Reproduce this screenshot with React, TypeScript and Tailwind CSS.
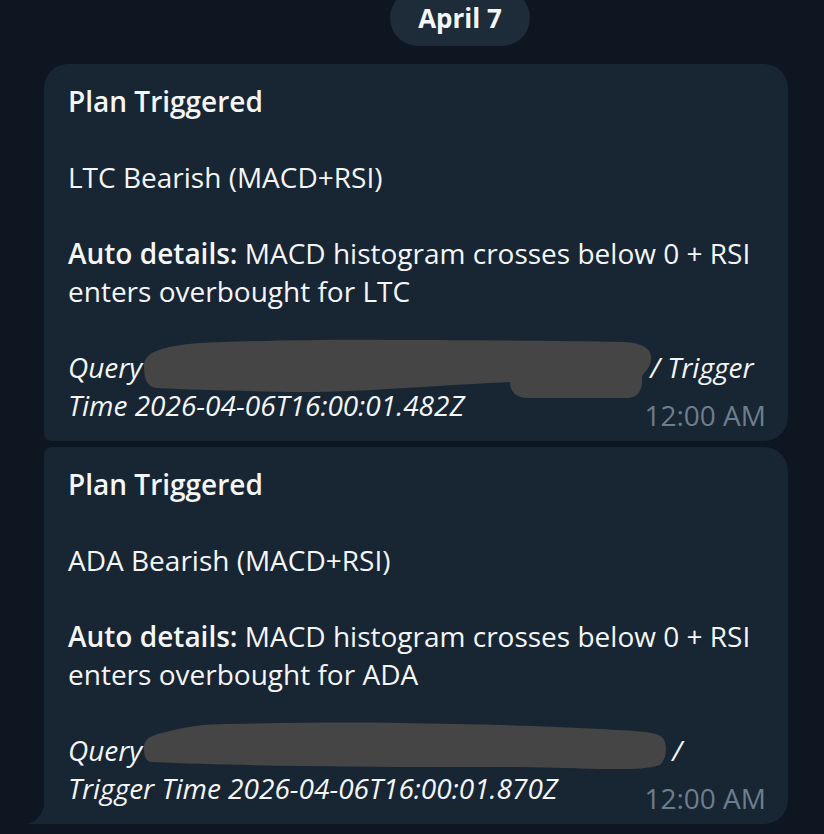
import React from "react";

function Blob1() {
  return (
    <svg className="absolute left-0 top-0 pointer-events-none" width="700" height="360" style={{ overflow: "visible" }}>
      <path
        d="M100 302 C100 288 118 282 156 279 C230 276 300 275 356 276 C430 276 520 277 580 278 C600 279 609 286 607 296 C606 304 601 308 598 312 C599 323 596 333 585 334 L485 334 C471 334 466 327 466 318 C430 320 406 321 380 323 C330 326 290 328 256 328 C200 327 150 326 112 324 C102 322 100 314 100 302 Z"
        fill="#454545"
      />
    </svg>
  );
}

function Blob2() {
  return (
    <svg className="absolute left-0 top-0 pointer-events-none" width="700" height="360" style={{ overflow: "visible" }}>
      <path
        d="M100 300 C100 292 108 288 118 286 C140 280 160 277 182 277 C240 276 300 275 356 276 C430 277 500 279 556 282 C590 284 610 284 618 290 C624 296 623 312 616 318 C600 323 580 322 556 322 C520 321 490 320 456 320 C390 320 320 320 256 319 C200 318 150 317 106 315 C101 313 100 308 100 300 Z"
        fill="#454545"
      />
    </svg>
  );
}

function Bubble({
  coin,
  first,
  queryLine,
  timeLine,
}: {
  coin: string;
  first: boolean;
  queryLine: React.ReactNode;
  timeLine: string;
}) {
  return (
    <div
      className={
        "relative bg-[#182533] text-[#f4f6f8] pl-[24px] pr-[22px] pt-[18px] pb-[17px] " +
        (first
          ? "rounded-tl-[24px] rounded-tr-[24px] rounded-br-[24px] rounded-bl-[7px]"
          : "rounded-tl-[7px] rounded-tr-[24px] rounded-br-[24px] rounded-bl-none")
      }
    >
      <div className="text-[28px] leading-[38px] whitespace-nowrap">
        <div className="font-semibold">Plan Triggered</div>
        <div className="h-[38px]" />
        <div>{coin} Bearish (MACD+RSI)</div>
        <div className="h-[38px]" />
        <div>
          <span className="font-semibold">Auto details:</span> MACD histogram crosses below 0 + RSI
        </div>
        <div>enters overbought for {coin}</div>
        <div className="h-[38px]" />
        <div className="italic">{queryLine}</div>
        <div className="flex items-end justify-between">
          <span className="italic">{timeLine}</span>
          <span className="text-[#6c7e8e] leading-[18px]">12:00 AM</span>
        </div>
      </div>
      {first ? <Blob1 /> : <Blob2 />}
      {!first && (
        <svg className="absolute left-[-17px] bottom-0" width="18" height="22" viewBox="0 0 18 22">
          <path d="M17.5 0 L17.5 22 L0 22 C8 20 16 14 17.5 0 Z" fill="#182533" />
        </svg>
      )}
    </div>
  );
}

export default function App() {
  return (
    <div className="min-h-[834px] w-[824px] overflow-hidden bg-[#0e1621] font-['Open_Sans',sans-serif]">
      <div className="flex pl-[390px] mt-[-10px]">
        <div className="h-[56px] w-[140px] rounded-full bg-[#1e2c3a] flex items-center justify-center text-[26px] font-bold text-[#f4f6f8]">
          April 7
        </div>
      </div>
      <div className="mt-[18px] pl-[44px] pr-[36px] flex flex-col gap-[6px]">
        <Bubble
          coin="LTC"
          first={true}
          queryLine={
            <>
              Query<span className="inline-block w-[508px]" />/ Trigger
            </>
          }
          timeLine="Time 2026-04-06T16:00:01.482Z"
        />
        <Bubble
          coin="ADA"
          first={false}
          queryLine={
            <>
              Query<span className="inline-block w-[530px]" />/
            </>
          }
          timeLine="Trigger Time 2026-04-06T16:00:01.870Z"
        />
      </div>
    </div>
  );
}
